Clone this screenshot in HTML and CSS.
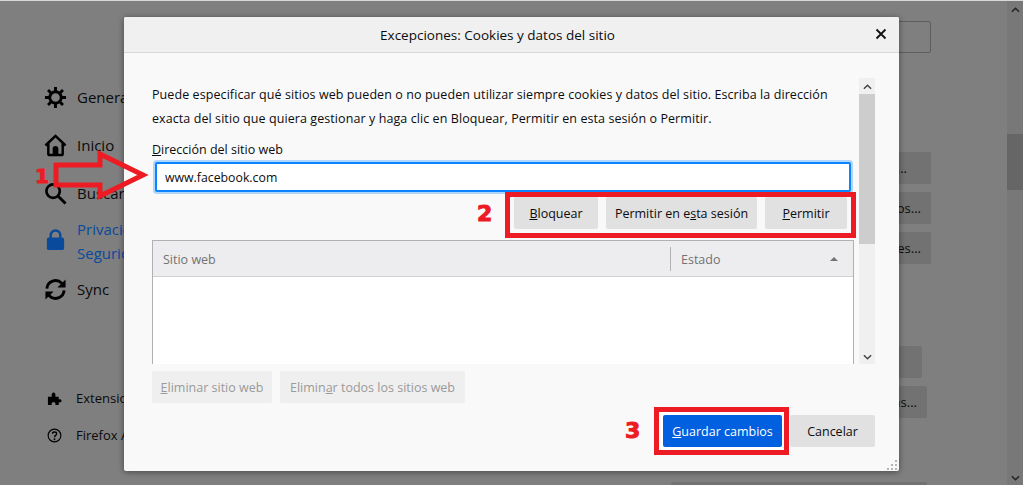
FILE: index.html
```html
<!DOCTYPE html>
<html lang="es">
<head>
  <meta charset="UTF-8" />
  <title>Excepciones: Cookies y datos del sitio</title>
  <link rel="stylesheet" href="styles.css">
</head>
<body>

  <div class="page">
    <nav class="sidebar">
      <div class="nav-item">
        <svg class="nav-icon" viewBox="0 0 24 24"><g fill="none" stroke="#000" stroke-width="3"><circle cx="12" cy="12" r="6"/><path d="M12 1v5M12 18v5M1 12h5M18 12h5M4.2 4.2l3.6 3.6M16.2 16.2l3.6 3.6M4.2 19.8l3.6-3.6M16.2 7.8l3.6-3.6"/></g></svg>
        <span>General</span>
      </div>
      <div class="nav-item">
        <svg class="nav-icon" viewBox="0 0 24 24"><path d="M1.5 12 12 2l10.500 10M4.500 10v10.500a1.500 1.500 0 0 0 1.500 1.500h12a1.500 1.500 0 0 0 1.500-1.500V10" fill="none" stroke="#000" stroke-width="2.600"/><path d="M9 22v-6.500a3 3 0 0 1 6 0V22z" fill="#000"/></svg>
        <span>Inicio</span>
      </div>
      <div class="nav-item nav-before-active">
        <svg class="nav-icon" viewBox="0 0 24 24"><circle cx="9.500" cy="9.500" r="7" fill="none" stroke="#000" stroke-width="2.800"/><path d="m14.500 14.500 8 8" stroke="#000" stroke-width="3"/></svg>
        <span>Buscar</span>
      </div>
      <div class="nav-item nav-active">
        <svg class="nav-icon lock-icon" viewBox="0 0 24 24"><path d="M7 11V7.500a5 5 0 0 1 10 0V11" fill="none" stroke="#0a4a9c" stroke-width="2.600"/><rect x="3" y="10" width="18" height="13" rx="2" fill="#0a4a9c"/></svg>
        <span>Privacidad &amp;<br>Seguridad</span>
      </div>
      <div class="nav-item">
        <svg class="nav-icon" viewBox="0 0 24 24"><g fill="none" stroke="#000" stroke-width="3"><path d="M3 11a9 9 0 0 1 15.500-5.500L21 8"/><path d="M21 13a9 9 0 0 1-15.500 5.500L3 16"/></g><path d="M22.500 1.500V10h-8.500zM1.500 22.500V14h8.500z" fill="#000"/></svg>
        <span>Sync</span>
      </div>

      <div class="nav-bottom">
        <div class="nav-small">
          <svg class="small-icon" viewBox="0 0 16 16"><path d="M1 6h4V4.500C5 3 5.500 1.500 7 1.500S9 3 9 4.500V6h3.500v3C14 8.500 15.500 9 15.500 10.500S14 12.500 12.500 12V15H9v-1.500c0-1-1-1.500-2-1.500s-2 .5-2 1.500V15H1z" fill="#000"/></svg>
          <span>Extensiones y temas</span>
        </div>
        <div class="nav-small">
          <svg class="small-icon" viewBox="0 0 16 16"><circle cx="8" cy="8" r="6.800" fill="none" stroke="#000" stroke-width="1.200"/><path d="M5.800 6.200C5.800 3.600 10.300 3.600 10.300 6.200 10.300 8 8 7.800 8 9.800" fill="none" stroke="#000" stroke-width="1.400"/><circle cx="8" cy="12" r="1" fill="#000"/></svg>
          <span>Firefox Ayuda</span>
        </div>
      </div>
    </nav>

    <main class="content">
      <div class="search-box"></div>
      <div class="ghost-btn ghost-first">...</div>
      <div class="ghost-btn">os...</div>
      <div class="ghost-btn">es...</div>
      <div class="ghost-btn ghost-short ghost-gap"></div>
      <div class="ghost-btn ghost-mid">ns...</div>
      <div class="ghost-btn ghost-mid ghost-last"></div>
    </main>

    <div class="page-scroll">
      <svg class="chevron" viewBox="0 0 10 6"><path d="M1 5l4-4 4 4" fill="none" stroke="#222" stroke-width="1.600"/></svg>
      <div class="page-thumb"></div>
      <svg class="chevron chevron-end" viewBox="0 0 10 6"><path d="M1 1l4 4 4-4" fill="none" stroke="#222" stroke-width="1.600"/></svg>
    </div>
  </div>

  <div class="dialog">
    <header class="dialog-head">
      <h1>Excepciones: Cookies y datos del sitio</h1>
      <svg class="close" viewBox="0 0 12 12"><path d="M1.500 1.500l9 9M10.500 1.500l-9 9" stroke="#111" stroke-width="1.800"/></svg>
    </header>

    <div class="dialog-scroll">
      <div class="scroll-inner">
        <p class="intro">Puede especificar qué sitios web pueden o no pueden utilizar siempre cookies y datos del sitio. Escriba la dirección exacta del sitio que quiera gestionar y haga clic en Bloquear, Permitir en esta sesión o Permitir.</p>
        <label class="field-label"><u>D</u>irección del sitio web</label>
        <input class="url-input" type="text" value="www.facebook.com" />

        <div class="red-frame top-actions">
          <button class="btn"><u>B</u>loquear</button>
          <button class="btn btn-session">Permitir en e<u>s</u>ta sesión</button>
          <button class="btn btn-allow"><u>P</u>ermitir</button>
        </div>

        <div class="sites">
          <div class="sites-head">
            <span class="col-site">Sitio web</span>
            <span class="col-state">Estado</span>
            <span class="sort-arrow"></span>
          </div>
        </div>
      </div>

      <div class="scrollbar">
        <svg class="chevron" viewBox="0 0 10 6"><path d="M1 5l4-4 4 4" fill="none" stroke="#444" stroke-width="1.600"/></svg>
        <div class="thumb"></div>
        <svg class="chevron chevron-end" viewBox="0 0 10 6"><path d="M1 1l4 4 4-4" fill="none" stroke="#444" stroke-width="1.600"/></svg>
      </div>
    </div>

    <div class="remove-row">
      <button class="btn btn-off"><u>E</u>liminar sitio web</button>
      <button class="btn btn-off">Elimin<u>a</u>r todos los sitios web</button>
    </div>

    <div class="confirm-row">
      <span class="step step-3">3</span>
      <div class="red-frame save-frame">
        <button class="btn btn-primary"><u>G</u>uardar cambios</button>
      </div>
      <button class="btn btn-cancel">Cancelar</button>
    </div>

    <svg class="grip" viewBox="0 0 10 10"><path d="M8 0h2v2H8zM4 4h2v2H4zM8 4h2v2H8zM0 8h2v2H0zM4 8h2v2H4zM8 8h2v2H8z" fill="#b5b5b5"/></svg>
  </div>

  <!-- annotations drawn on top of the screenshot -->
  <svg class="big-arrow" viewBox="0 0 96 52"><path d="M3 16H47V5L90 26 47 47V36H3z" fill="none" stroke="#ed1c24" stroke-width="5"/></svg>
  <span class="step step-1">1</span>
  <span class="step step-2">2</span>

</body>
</html>
```

FILE: styles.css
```css
* {
  margin: 0;
  padding: 0;
  box-sizing: border-box;
}

html, body {
  height: 100%;
  font-family: 'Open Sans', 'Noto Sans', sans-serif;
  overflow: hidden;
  background: #7f7f7f;
}

.page {
  display: flex;
  height: 485px;
  border-top: 1px solid #d8d8d8;
  color: #0a0a0a;
  overflow: hidden;
}

/* sidebar */

.sidebar {
  width: 250px;
  padding: 84px 0 0 44px;
  display: flex;
  flex-direction: column;
}

.nav-item {
  display: flex;
  align-items: center;
  gap: 10px;
  min-height: 24px;
  margin-bottom: 24px;
  font-size: 15px;
  line-height: 24px;
  white-space: nowrap;
}

.nav-before-active {
  margin-bottom: 12px;
}

.nav-active {
  margin-bottom: 12px;
  color: #0a4a9c;
}

.nav-icon {
  width: 23px;
  height: 23px;
  flex-shrink: 0;
}

.lock-icon {
  margin-top: -4px;
}

.nav-bottom {
  margin-top: 63px;
  padding-left: 3px;
}

.nav-small {
  display: flex;
  align-items: center;
  gap: 14px;
  height: 20px;
  margin-bottom: 17px;
  font-size: 13px;
  white-space: nowrap;
}

.small-icon {
  width: 15px;
  height: 15px;
  flex-shrink: 0;
}

/* settings page behind the dialog */

.content {
  flex: 1;
  display: flex;
  flex-direction: column;
  align-items: flex-end;
  padding: 20px 76px 0 0;
  font-size: 13px;
}

.search-box {
  flex-shrink: 0;
  width: 300px;
  height: 32px;
  border: 1px solid #5e5e5e;
  border-radius: 2px;
  margin-bottom: 99px;
}

.ghost-btn {
  flex-shrink: 0;
  width: 300px;
  height: 32px;
  margin-bottom: 8px;
  padding-right: 10px;
  background: #727272;
  border-radius: 2px;
  text-align: right;
  line-height: 32px;
}

.ghost-first {
  padding-right: 24px;
}

.ghost-gap {
  margin-top: 74px;
}

.ghost-short {
  margin-right: 9px;
}

.ghost-mid {
  margin-right: 4px;
}

.ghost-last {
  width: 256px;
  height: 3px;
  margin-top: 56px;
  margin-bottom: 0;
}

.page-scroll {
  width: 16px;
  background: #787878;
  display: flex;
  flex-direction: column;
  align-items: center;
  padding-top: 6px;
}

.page-thumb {
  width: 16px;
  height: 56px;
  margin-top: 121px;
  background: #666;
}

.chevron {
  width: 9px;
  height: 6px;
  flex-shrink: 0;
}

.chevron-end {
  margin-top: auto;
  margin-bottom: 4px;
}

/* dialog */

.dialog {
  position: absolute;
  left: 124px;
  top: 17px;
  width: 775px;
  height: 454px;
  display: flex;
  flex-direction: column;
  background: #f9f9fa;
  border-radius: 2px;
  box-shadow: 0 1px 6px rgba(0, 0, 0, 0.45);
  font-size: 12.5px;
  color: #0c0c0d;
  overflow: hidden;
}

.dialog-head {
  flex: 0 0 36px;
  display: flex;
  align-items: center;
  justify-content: center;
  padding-right: 28px;
  background: #f0f0f0;
  border-bottom: 1px solid #d7d7db;
  position: relative;
}

.dialog-head h1 {
  font-size: 13.5px;
  font-weight: 500;
}

.close {
  position: absolute;
  right: 12px;
  top: 11px;
  width: 12px;
  height: 12px;
}

.dialog-scroll {
  flex: 0 0 311px;
  display: flex;
  padding-left: 28px;
  gap: 5px;
  overflow: hidden;
}

.scroll-inner {
  width: 702px;
  padding-top: 30px;
}

.intro {
  line-height: 24px;
  margin-bottom: 10px;
  letter-spacing: 0.08px;
}

.field-label {
  display: block;
  line-height: 18px;
  margin-bottom: 3px;
}

.url-input {
  display: block;
  width: 696px;
  height: 30px;
  margin-left: 3px;
  padding: 0 8px;
  border: 2px solid #0a84ff;
  border-radius: 2px;
  box-shadow: 0 0 0 2px rgba(10, 132, 255, 0.3);
  outline: none;
  background: #fff;
  color: #0c0c0d;
  font-family: inherit;
  font-size: 12.3px;
}

.red-frame {
  display: flex;
  border: 5px solid #ed1c24;
}

.top-actions {
  gap: 8px;
  width: 351px;
  margin-left: 353px;
  padding: 0 4px 4px;
  position: relative;
}

.btn {
  height: 32px;
  padding: 0 8px;
  border: none;
  border-radius: 2px;
  background: #e1e1e2;
  color: #0c0c0d;
  font-family: inherit;
  font-size: 12.5px;
  flex-shrink: 0;
  white-space: nowrap;
}

.top-actions .btn {
  width: 84px;
}

.top-actions .btn-session {
  width: 151px;
}

.top-actions .btn-allow {
  width: 82px;
}

.sites {
  height: 140px;
  margin-top: 2px;
  background: #fff;
  border: 1px solid #b1b1b3;
  border-bottom: none;
}

.sites-head {
  display: flex;
  align-items: center;
  height: 36px;
  background: #ededf0;
  border-bottom: 1px solid #d0d0d2;
  color: #737373;
  position: relative;
}

.col-site {
  width: 517px;
  padding: 1px 0 0 10px;
}

.col-state {
  height: 24px;
  line-height: 25px;
  padding-left: 10px;
  border-left: 1px solid #b1b1b3;
}

.sort-arrow {
  position: absolute;
  right: 15px;
  top: 16px;
  border-left: 4px solid transparent;
  border-right: 4px solid transparent;
  border-bottom: 4px solid #737373;
}

.scrollbar {
  width: 16px;
  margin-top: 25px;
  display: flex;
  flex-direction: column;
  align-items: center;
  background: #f0f0f0;
  padding-top: 6px;
}

.thumb {
  width: 16px;
  height: 150px;
  margin-top: 4px;
  background: #cdcdcd;
}

.remove-row {
  display: flex;
  gap: 8px;
  padding: 7px 0 0 28px;
}

.btn-off {
  background: #efeff0;
  color: #9a9a9a;
}

.remove-row .btn-off:first-child {
  width: 120px;
}

.remove-row .btn-off:last-child {
  width: 185px;
}

.confirm-row {
  display: flex;
  align-items: center;
  justify-content: flex-end;
  padding: 4px 24px 0 0;
  position: relative;
}

.save-frame {
  background: #fff;
  padding: 3px 2px 3px 4px;
  margin-right: 1px;
}

.btn-primary {
  width: 119px;
  background: #0060df;
  color: #fff;
}

.btn-cancel {
  width: 85px;
}

.grip {
  position: absolute;
  right: 2px;
  bottom: 1px;
  width: 10px;
  height: 10px;
}

/* red annotations */

.big-arrow {
  position: absolute;
  left: 53px;
  top: 149px;
  width: 96px;
  height: 52px;
}

.step {
  position: absolute;
  font-family: 'DejaVu Sans', sans-serif;
  font-weight: 700;
  font-size: 22px;
  line-height: 22px;
  color: #ed1c24;
  -webkit-text-stroke: 1px #ed1c24;
}

.step-1 {
  left: 35px;
  top: 165px;
  font-size: 20px;
}

.step-2 {
  left: 477px;
  top: 203px;
}

.step-3 {
  left: 501px;
  top: 17px;
}
```
